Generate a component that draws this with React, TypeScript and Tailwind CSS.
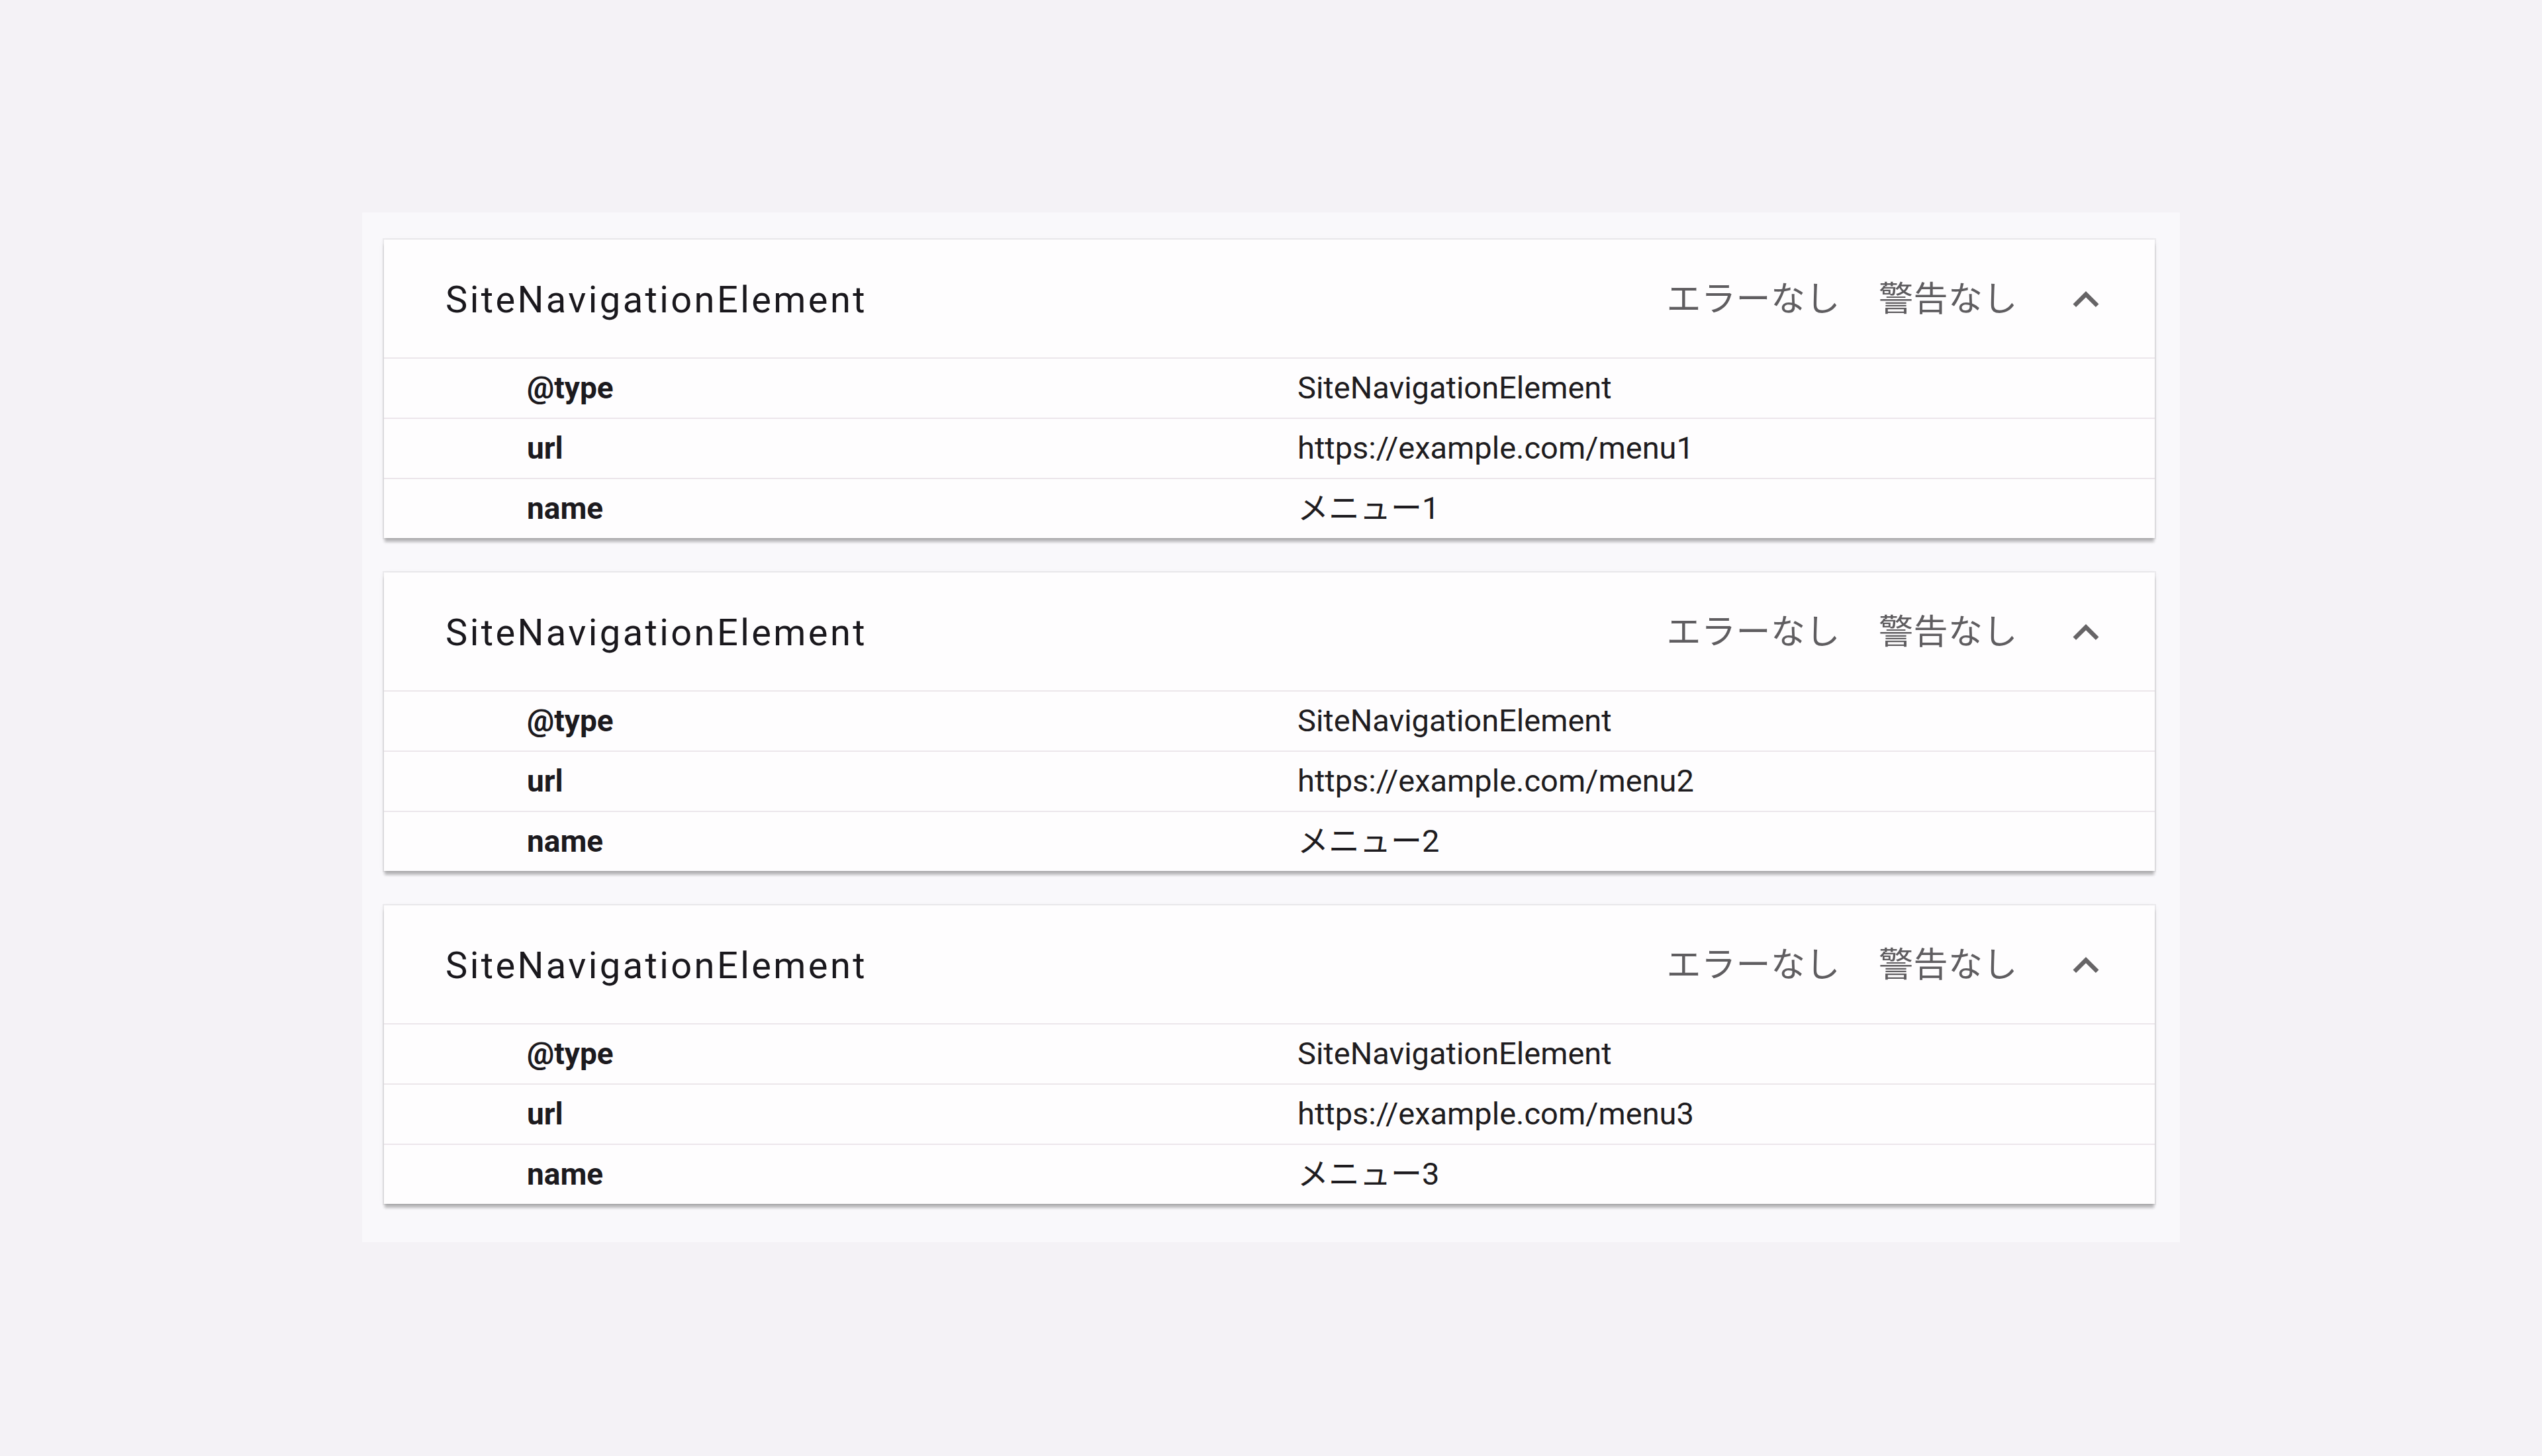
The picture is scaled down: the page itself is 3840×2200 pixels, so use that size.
import React from "react";

const items = [
  { url: "https://example.com/menu1", name: "メニュー1" },
  { url: "https://example.com/menu2", name: "メニュー2" },
  { url: "https://example.com/menu3", name: "メニュー3" },
];

function ChevronUp() {
  return (
    <svg viewBox="0 0 24 24" className="h-[78px] w-[78px] fill-[#666466]">
      <path d="M12 8l-6 6 1.41 1.41L12 10.83l4.59 4.58L18 14z" />
    </svg>
  );
}

function Row({ label, value }: { label: string; value: string }) {
  return (
    <div className="flex h-[91px] items-center border-t-2 border-[#ece6eb]">
      <div className="w-[1380px] pl-[216px] text-[46px] font-bold text-[#1c1a1e]">
        {label}
      </div>
      <div className="text-[47px] text-[#1e1c20]">{value}</div>
    </div>
  );
}

function Panel({ url, name }: { url: string; name: string }) {
  return (
    <section className="bg-[#fefdfe] shadow-[0_7px_4px_-1px_rgba(0,0,0,0.24),0_0_0_2px_rgba(0,0,0,0.05),0_2px_8px_rgba(0,0,0,0.07)]">
      <header className="flex h-[178px] items-center pt-[4px] pl-[93px] pr-[65px]">
        <h2 className="flex-1 text-[56px] tracking-[3.4px] text-[#1a181d]">
          SiteNavigationElement
        </h2>
        <div className="flex items-center text-[52px] tracking-[0.5px] text-[#5f5d60]">
          <span>エラーなし</span>
          <span className="ml-[58px]">警告なし</span>
          <span className="ml-[64px] flex">
            <ChevronUp />
          </span>
        </div>
      </header>
      <Row label="@type" value="SiteNavigationElement" />
      <Row label="url" value={url} />
      <Row label="name" value={name} />
    </section>
  );
}

export default function App() {
  return (
    <main
      className="min-h-[2200px] w-full bg-[#f4f2f6] pt-[321px]"
      style={{ fontFamily: 'Roboto, "Noto Sans CJK JP", sans-serif' }}
    >
      <div className="mx-auto flex w-[2746px] flex-col gap-[52px] bg-[#f9f8fb] pt-[41px] pb-[58px] pl-[33px] pr-[38px]">
        {items.map((it) => (
          <Panel key={it.url} url={it.url} name={it.name} />
        ))}
      </div>
    </main>
  );
}
